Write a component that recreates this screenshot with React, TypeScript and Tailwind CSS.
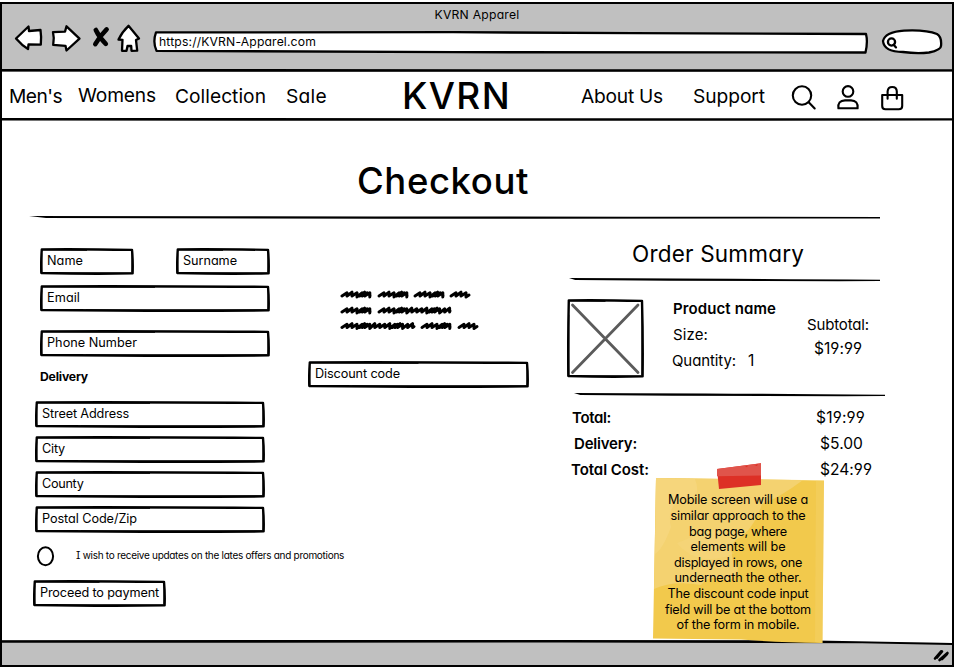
import { useLayoutEffect, useRef } from "react";
import type { ReactNode } from "react";

/** One line of lettering, tracked so that it fills the given width. */
function Txt({ w, className = "", children }: { w: number; className?: string; children: string }) {
  const ref = useRef<HTMLSpanElement>(null);
  useLayoutEffect(() => {
    const el = ref.current;
    if (!el) return;
    el.style.letterSpacing = "0px";
    const natural = el.getBoundingClientRect().width;
    el.style.letterSpacing = `${(w - natural) / children.length}px`;
  }, [w, children]);
  return (
    <span ref={ref} className={`inline-block shrink-0 whitespace-pre leading-none ${className}`}>
      {children}
    </span>
  );
}

/** Rectangle with a slightly uneven pen outline. */
function SketchBox({ w, h, className = "", children }: { w: number; h: number; className?: string; children?: ReactNode }) {
  return (
    <div className={`relative flex shrink-0 items-center ${className}`} style={{ width: w, height: h }}>
      <svg className="absolute inset-0" width={w} height={h} fill="none" stroke="#000" strokeLinejoin="round">
        <path
          strokeWidth="2.4"
          fill="#fff"
          d={`M1.8 1.4 Q${w * 0.4} 0.9 ${w - 2} 1.9 Q${w - 0.9} ${h * 0.5} ${w - 1.4} ${h - 1.6} Q${w * 0.55} ${h - 0.7} 1.3 ${h - 2} Q0.9 ${h * 0.5} 1.8 1.4Z`}
        />
        <path strokeWidth="1" d={`M1.8 ${h * 0.2} L2 ${h - 2} M2 2.1 L${w * 0.5} 2.3 M${w - 2} 3 L${w - 2.2} ${h - 2} M${w * 0.2} ${h - 2.1} L${w - 3} ${h - 2.2}`} />
      </svg>
      <div className="relative flex items-center">{children}</div>
    </div>
  );
}

function Field({ label, tw, w, className = "" }: { label: string; tw: number; w: number; className?: string }) {
  return (
    <SketchBox w={w} h={27} className={`pl-[7px] pb-[1px] ${className}`}>
      <Txt w={tw} className="text-[12.7px]">{label}</Txt>
    </SketchBox>
  );
}

/** Tapering pen stroke used as a divider. */
function Stroke({ w, drop = 1, className = "" }: { w: number; drop?: number; className?: string }) {
  return (
    <svg className={`block shrink-0 ${className}`} width={w} height="4">
      <path d={`M0 0 Q${w * 0.3} 0.1 ${w} ${drop + 0.2} L${w} ${drop + 1.6} Q${w * 0.5} 3.3 ${w * 0.02} 2Z`} />
    </svg>
  );
}

function BarLine({ className = "" }: { className?: string }) {
  return (
    <svg className={`block shrink-0 ${className}`} width="950" height="3">
      <path d="M0 0 L480 0.2 L950 0.3 V2.6 L480 2.8 L0 2.5Z" />
    </svg>
  );
}

function scribble(x: number, y: number, len: number) {
  let d = `M${x} ${y + 2}`;
  let cx = x;
  let i = 0;
  while (cx + 5 < x + len) {
    const step = i % 8 > 2 && i % 8 < 6 ? 2.6 : 5;
    const rise = i % 3 === 1 ? 3.8 : 3.2;
    d += ` L${cx + 5} ${y + 2 - rise} L${cx + step} ${y + 2 + (i % 4 === 2 ? 0.9 : 0)}`;
    cx += step;
    i += 1;
  }
  return d + ` L${x + len} ${y + 1}`;
}

const words: [number, number, number][] = [
  [2, 5, 28], [39, 5, 28], [75, 5, 28], [111, 5, 18],
  [2, 21, 28], [39, 21, 71],
  [2, 36.5, 72], [82, 36.5, 28], [119, 36.5, 18],
];

const noteLines: [string, number][] = [
  ["Mobile screen will use a", 140],
  ["similar approach to the", 135],
  ["bag page, where", 98],
  ["elements will be", 95],
  ["displayed in rows, one", 128],
  ["underneath the other.", 127],
  ["The discount code input", 141],
  ["field will be at the bottom", 146],
  ["of the form in mobile.", 123],
];

function Header() {
  return (
    <header className="h-[65px] shrink-0 bg-[#c0c0c0]">
      <div className="flex h-[20px] items-center justify-center pt-[2px]">
        <Txt w={85} className="text-[12.2px]">KVRN Apparel</Txt>
      </div>
      <div className="flex items-start pl-[12px]">
        <svg className="shrink-0" width="128" height="30" fill="#fff" stroke="#000" strokeWidth="2.3" strokeLinejoin="round">
          <path d="M2 14.5 L14.5 2.5 L15 7 L26.5 6 Q27.5 12 26.8 20.6 L14.5 20.5 L14 25 Q8 21.5 2 14.5Z" />
          <path d="M39 8.2 L51 7.6 L52.5 2.3 L65.5 14.6 L52.5 26.5 L51.5 21.8 L39.2 20.8 Q40.5 14 39 8.2Z" />
          <path fill="none" strokeWidth="4.6" strokeLinecap="round" d="M81.8 6 Q85 13 91.8 19.8 M92.6 5.4 Q86 12 81.3 20.2" />
          <path d="M114.5 1.8 L125 14.5 L122 16 L123.2 26.6 L117.5 26.8 L117.2 22 L113.5 22 L112.5 26.8 L108 26.8 L108.5 15.8 L104.5 15.5 Q108 8 114.5 1.8Z" />
        </svg>
        <div className="relative ml-[11px] mt-[6px] flex h-[24px] w-[716px] items-center pl-[6px]">
          <svg className="absolute inset-0" width="716" height="24" stroke="#000" strokeWidth="2.3" strokeLinejoin="round">
            <path fill="#fff" d="M3 2.4 L300 2.2 L480 3.2 L713 4 Q715 12 712.5 22.5 L300 22.2 L3.5 20.8 Q-0.5 12 3 2.4Z" />
          </svg>
          <Txt w={157} className="relative text-[12.2px]">https://KVRN-Apparel.com</Txt>
        </div>
        <svg className="ml-[12px] mt-[4px] shrink-0" width="62" height="28" fill="#fff" stroke="#000" strokeWidth="2.3" strokeLinecap="round" strokeLinejoin="round">
          <path d="M2 13 Q4 4 23 2.6 Q45 1.5 56 6 Q61 9 60 18 Q60 22 48 24.5 Q36 26 22 24 Q3 24 2 13Z" />
          <circle cx="10.5" cy="14" r="3.6" />
          <path d="M12.7 16.8 L15 19.4" />
        </svg>
      </div>
    </header>
  );
}

function Nav() {
  return (
    <nav className="flex h-[46px] shrink-0 items-center pl-[7px] pt-[1px]">
      <Txt w={53} className="mt-[3px] text-[19.2px]">Men's</Txt>
      <Txt w={78} className="ml-[16px] text-[19.2px]">Womens</Txt>
      <Txt w={91} className="ml-[19px] mt-[3px] text-[19.2px]">Collection</Txt>
      <Txt w={41} className="ml-[20px] mt-[3px] text-[19.2px]">Sale</Txt>
      <Txt w={109} className="ml-[75px] text-[37px] font-medium">KVRN</Txt>
      <Txt w={82} className="ml-[70px] mt-[3px] text-[19.2px]">About Us</Txt>
      <Txt w={72} className="ml-[30px] mt-[3px] text-[19.2px]">Support</Txt>
      <svg className="ml-[26px] mt-[2px] shrink-0" width="113" height="30" fill="none" stroke="#000" strokeWidth="2.1" strokeLinecap="round" strokeLinejoin="round">
        <circle cx="11" cy="13.5" r="9.2" />
        <path d="M17.7 20.3 L23.7 26.5" />
        <circle cx="57" cy="9.4" r="5.3" />
        <path d="M47.4 26.3 Q46.5 18.5 54 18.4 H60 Q67.3 18.5 66.6 26.3Z" />
        <path d="M91.2 13 H111.2 V24 Q111.2 27.3 107.8 27.3 H94.5 Q91.2 27.3 91.2 24Z" />
        <path d="M96.6 16.8 V9.4 Q97 5 101.2 5 Q105.6 5 105.8 9.4 V16.8" />
      </svg>
    </nav>
  );
}

function CheckoutForm() {
  return (
    <section className="flex w-[268px] shrink-0 flex-col pl-[31px] pt-[28px]">
      <div className="flex justify-between pl-[7px]">
        <Field label="Name" tw={36} w={94} />
        <Field label="Surname" tw={54} w={94} />
      </div>
      <Field label="Email" tw={33} w={230} className="ml-[7px] mt-[10px]" />
      <Field label="Phone Number" tw={90} w={230} className="ml-[7px] mt-[18px]" />
      <div className="ml-[7px] mt-[14px] flex h-[13px] items-center">
        <Txt w={48} className="text-[12.2px] font-bold">Delivery</Txt>
      </div>
      <div className="ml-[2px] mt-[17px] flex flex-col gap-[8px]">
        <Field label="Street Address" tw={87} w={230} />
        <Field label="City" tw={23} w={230} />
        <Field label="County" tw={41.5} w={230} />
        <Field label="Postal Code/Zip" tw={95} w={230} />
      </div>
      <div className="ml-[3px] mt-[12px] flex h-[22px] items-center">
        <svg width="20" height="22" className="shrink-0" fill="none" stroke="#000" strokeWidth="2">
          <ellipse cx="9.5" cy="11.3" rx="7.6" ry="9" />
        </svg>
        <Txt w={268} className="-mt-[2px] ml-[20px] text-[10px] [font-feature-settings:'cv11','cv08']">
          I wish to receive updates on the lates offers and promotions
        </Txt>
      </div>
      <SketchBox w={133} h={27} className="mt-[13px] pb-[1px] pl-[7px]">
        <Txt w={119} className="text-[12.7px]">Proceed to payment</Txt>
      </SketchBox>
    </section>
  );
}

function Discount() {
  return (
    <section className="ml-[38px] w-[221px] shrink-0 pt-[69px]">
      <svg className="ml-[32px] block" width="142" height="44" fill="none" stroke="#000" strokeWidth="3" strokeLinecap="round" strokeLinejoin="round">
        {words.map(([x, y, len]) => (
          <path key={`${x}-${y}`} d={scribble(x, y, len)} />
        ))}
      </svg>
      <Field label="Discount code" tw={85} w={221} className="mt-[28px]" />
    </section>
  );
}

function Row({ label, lw, value, vw, left, gap }: { label: string; lw: number; value: string; vw: number; left: number; gap: number }) {
  return (
    <div className="flex h-[26px] items-center" style={{ paddingLeft: left }}>
      <Txt w={lw} className="mt-[1px] text-[15px] font-semibold">{label}</Txt>
      <span className="shrink-0" style={{ width: gap }} />
      <Txt w={vw} className="mt-[1px] text-[15.6px]">{value}</Txt>
    </div>
  );
}

function OrderSummary() {
  return (
    <section className="ml-[38px] flex w-[320px] shrink-0 flex-col pt-[20px]">
      <div className="flex h-[29px] items-center pl-[65px]">
        <Txt w={172} className="text-[22.5px]">Order Summary</Txt>
      </div>
      <Stroke w={311} drop={1.5} className="ml-[2px] mt-[9px]" />
      <div className="mt-[17px] flex">
        <SketchBox w={77} h={79}>
          <svg width="77" height="79" stroke="#5b5b5b" strokeWidth="2.8" strokeLinecap="round">
            <path d="M5.5 6 L71 73.5 M71 6 L5.5 73.5" />
          </svg>
        </SketchBox>
        <div className="ml-[29px] flex w-[103px] flex-col">
          <div className="flex h-[19px] items-center"><Txt w={103} className="text-[15px] font-semibold">Product name</Txt></div>
          <div className="mt-[7px] flex h-[19px] items-center"><Txt w={35} className="text-[15px]">Size:</Txt></div>
          <div className="mt-[7px] flex h-[19px] items-center">
            <Txt w={64} className="-ml-[1px] text-[15px]">Quantity:</Txt>
            <Txt w={8} className="ml-[12px] text-[15.6px]">1</Txt>
          </div>
        </div>
        <div className="ml-[31px] flex w-[62px] flex-col items-center pt-[15px]">
          <div className="flex h-[20px] items-center"><Txt w={62} className="text-[15px]">Subtotal:</Txt></div>
          <div className="mt-[5px] flex h-[20px] items-center"><Txt w={48} className="text-[15.6px]">$19:99</Txt></div>
        </div>
      </div>
      <Stroke w={311} drop={1.5} className="ml-[7px] mt-[15px]" />
      <div className="mt-[7px] flex flex-col">
        <Row label="Total:" lw={39} left={5} gap={205} value="$19:99" vw={49} />
        <Row label="Delivery:" lw={63} left={7} gap={183} value="$5.00" vw={43} />
        <Row label="Total Cost:" lw={78} left={4} gap={171} value="$24:99" vw={52} />
      </div>
    </section>
  );
}

function StickyNote() {
  return (
    <aside className="absolute left-[649px] top-[457px] h-[184px] w-[176px]">
      <svg className="absolute inset-0" width="176" height="184">
        <path fill="#f2c94c" d="M5 17 L173 19.5 L171.5 182 Q120 181 90 178.5 Q40 178 2 177.5Z" />
        <path fill="#f4d270" d="M5 17 L152 19 Q128 37 111 43 Q102 70 86 78 Q78 84 82 100 Q94 112 76 120 Q60 112 50 124 Q22 119 3 128Z" />
        <path fill="#f6d984" opacity="0.6" d="M5 17 L44 18 Q52 40 32 37 Q15 45 20 66 Q12 88 4 93Z" />
        <path fill="#f6d984" opacity="0.35" d="M26 82 Q45 74 72 66 Q63 88 84 92 Q48 108 26 82Z" />
        <path fill="#f5d574" opacity="0.35" d="M165 19.4 L173 19.5 L171.5 182 L164 181Z" />
        <path fill="#dd3026" d="M66 8 L110 2.3 L110 24 L68 28Z" />
        <path fill="#e0544b" d="M66 8 L110 2.3 L110 14.5 L66 15.2Z" />
        <path fill="#dd3026" d="M94 5.2 l3 -0.6 l-1 1.7z M103 4 l4 -0.8 l-1 1.8z" />
      </svg>
      <div className="relative flex flex-col items-center pr-[2px] pt-[32px]">
        {noteLines.map(([line, w]) => (
          <div key={line} className="flex h-[15.6px] items-center">
            <Txt w={w} className="text-[12.7px]">{line}</Txt>
          </div>
        ))}
      </div>
    </aside>
  );
}

function Footer() {
  return (
    <footer className="relative h-[25px] shrink-0 bg-[#c0c0c0]">
      <svg className="block" width="950" height="25">
        <path fill="#fff" d="M560 0 H950 V3 L800 1Z" />
        <path d="M0 0.2 L550 0 L800 0.3 L950 3 V5 L860 3.2 L560 2.6 L0 2.8Z" />
        <path fill="none" stroke="#000" strokeWidth="2.6" strokeLinecap="round" d="M933 18.5 L939 11.5 M937.5 20 L945.5 13 M935 17.5 L940 11.5 M940 19 L945 14" />
      </svg>
    </footer>
  );
}

export default function App() {
  return (
    <div className="h-[669px] w-[955px] overflow-hidden bg-white pt-[2px] text-black [font-family:Inter,'Open_Sans',sans-serif] [font-feature-settings:'cv11','cv03','cv04']">
      <div className="relative flex h-[665px] w-[954px] flex-col border-2 border-black">
        <Header />
        <BarLine className="bg-[#c0c0c0]" />
        <Nav />
        <BarLine />
        <main className="flex min-h-0 flex-1 flex-col">
          <div className="flex h-[94px] shrink-0 items-center pl-[355px] pt-[27px]">
            <Txt w={172} className="text-[36.5px] font-medium">Checkout</Txt>
          </div>
          <Stroke w={851} drop={0.8} className="ml-[27px] mt-[1px]" />
          <div className="flex min-h-0 flex-1">
            <CheckoutForm />
            <Discount />
            <OrderSummary />
          </div>
        </main>
        <Footer />
        <StickyNote />
      </div>
    </div>
  );
}
